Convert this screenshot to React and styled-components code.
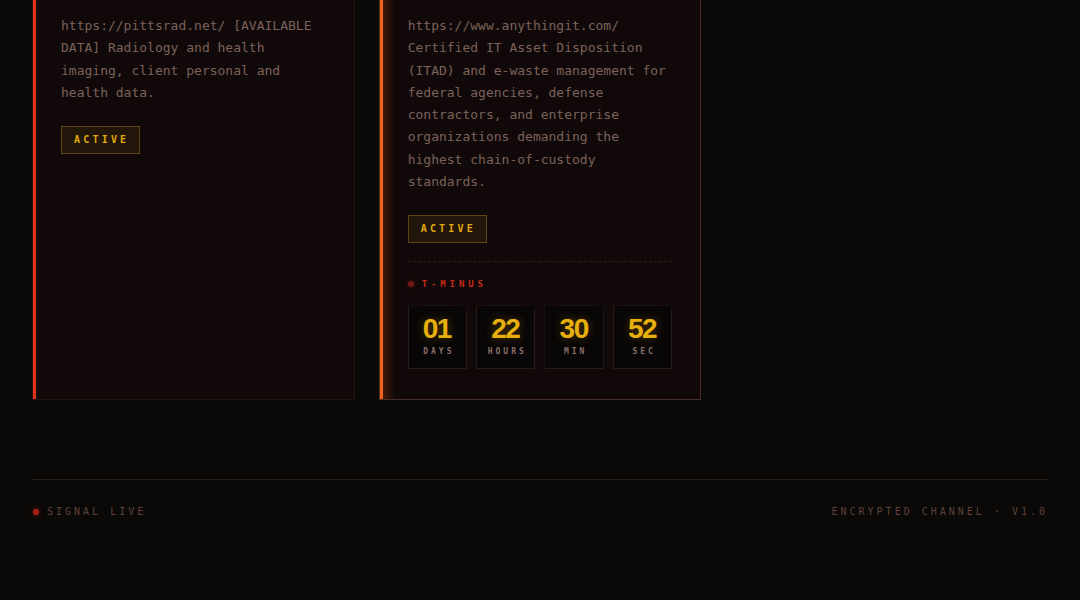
import React from 'react';
import styled, { createGlobalStyle } from 'styled-components';

const GlobalStyle = createGlobalStyle`
  html, body {
    margin: 0;
    padding: 0;
    background: #0a0907;
  }
  body {
    font-family: "DejaVu Sans Mono", "Liberation Mono", monospace;
  }
`;

const Page = styled.div`
  width: 1080px;
  height: 600px;
  overflow: hidden;
  background: #0a0907;
  padding: 0 32px;
  box-sizing: border-box;
`;

const Grid = styled.div`
  display: grid;
  grid-template-columns: repeat(3, 1fr);
  gap: 24px;
  margin-top: -20px;
  align-items: stretch;
`;

const Card = styled.div`
  position: relative;
  background: #110909;
  border: 1px solid ${p => (p.$featured ? '#4a3028' : '#24150f')};
  padding: 34px 28px 30px 28px;
  box-sizing: border-box;
  min-height: 420px;

  &::before {
    content: '';
    position: absolute;
    left: 0;
    top: 0;
    bottom: 0;
    width: 3px;
    background: ${p => p.$accent};
  }

  &::after {
    content: '';
    position: absolute;
    left: 3px;
    top: 0;
    bottom: 0;
    width: 12px;
    background: ${p =>
      p.$featured
        ? 'linear-gradient(to right, rgba(120, 45, 15, 0.45), rgba(120, 45, 15, 0))'
        : 'transparent'};
  }
`;

const Desc = styled.p`
  margin: 0;
  font-size: 13px;
  line-height: 22.3px;
  color: #7b625a;
`;

const Badge = styled.div`
  display: inline-block;
  margin-top: 22px;
  height: 28px;
  line-height: 26px;
  padding: 0 10px 0 12px;
  box-sizing: border-box;
  border: 1px solid #5e4410;
  background: #22160a;
  color: #e0a80e;
  font-size: 10px;
  font-weight: bold;
  letter-spacing: 3.2px;
`;

const Divider = styled.div`
  margin-top: 18px;
  border-top: 1px dashed #2e1e1a;
`;

const TLabel = styled.div`
  display: flex;
  align-items: center;
  gap: 8px;
  margin-top: 17px;
  color: #c42818;
  font-size: 9px;
  font-weight: bold;
  letter-spacing: 3.9px;
`;

const Dot = styled.span`
  width: 6px;
  height: 6px;
  border-radius: 50%;
  background: ${p => p.$color || '#6e1a12'};
  box-shadow: 0 0 5px ${p => p.$glow || 'rgba(160, 30, 20, 0.5)'};
`;

const Countdown = styled.div`
  display: grid;
  grid-template-columns: repeat(4, 1fr);
  gap: 9px;
  margin-top: 16px;
`;

const Unit = styled.div`
  height: 64px;
  background: #080606;
  border: 1px solid #2a1a16;
  box-sizing: border-box;
  display: flex;
  flex-direction: column;
  align-items: center;
  padding-top: 8px;
  clip-path: polygon(0 0, calc(100% - 5px) 0, 100% 5px, 100% 100%, 0 100%);
`;

const Num = styled.div`
  font-family: "Liberation Sans", Arial, sans-serif;
  font-weight: bold;
  font-size: 28px;
  line-height: 30px;
  letter-spacing: -1.5px;
  padding-right: 1px;
  color: #e8b00e;
  text-shadow: 0 0 10px rgba(232, 170, 14, 0.35);
`;

const UnitLabel = styled.div`
  margin-top: 3px;
  font-size: 8px;
  letter-spacing: 3px;
  padding-left: 3px;
  color: #8a706a;
  font-weight: bold;
`;

const Footer = styled.footer`
  margin-top: 79px;
  border-top: 1px solid #2a1c18;
  padding-top: 26px;
  display: flex;
  justify-content: space-between;
  align-items: center;
  font-size: 10px;
  letter-spacing: 3px;
  color: #5e423a;
`;

const Signal = styled.div`
  display: flex;
  align-items: center;
  gap: 8px;
  padding-left: 1px;
`;

const Version = styled.div``;

const units = [
  { n: '01', l: 'DAYS' },
  { n: '22', l: 'HOURS' },
  { n: '30', l: 'MIN' },
  { n: '52', l: 'SEC' },
];

export default function App() {
  return (
    <Page>
      <GlobalStyle />
      <Grid>
        <Card $accent="#e2321c">
          <Desc>
            https://pittsrad.net/ [AVAILABLE DATA] Radiology and health imaging, client personal and health data.
          </Desc>
          <Badge>ACTIVE</Badge>
        </Card>
        <Card $accent="#f0621a" $featured>
          <Desc>
            https://www.anythingit.com/ Certified IT Asset Disposition (ITAD) and e-waste management for federal agencies, defense contractors, and enterprise organizations demanding the highest chain-of-custody standards.
          </Desc>
          <Badge>ACTIVE</Badge>
          <Divider />
          <TLabel>
            <Dot />
            T-MINUS
          </TLabel>
          <Countdown>
            {units.map(u => (
              <Unit key={u.l}>
                <Num>{u.n}</Num>
                <UnitLabel>{u.l}</UnitLabel>
              </Unit>
            ))}
          </Countdown>
        </Card>
        <div />
      </Grid>
      <Footer>
        <Signal>
          <Dot $color="#b01e14" $glow="rgba(200, 30, 20, 0.6)" />
          SIGNAL LIVE
        </Signal>
        <Version>ENCRYPTED CHANNEL · V1.0</Version>
      </Footer>
    </Page>
  );
}
